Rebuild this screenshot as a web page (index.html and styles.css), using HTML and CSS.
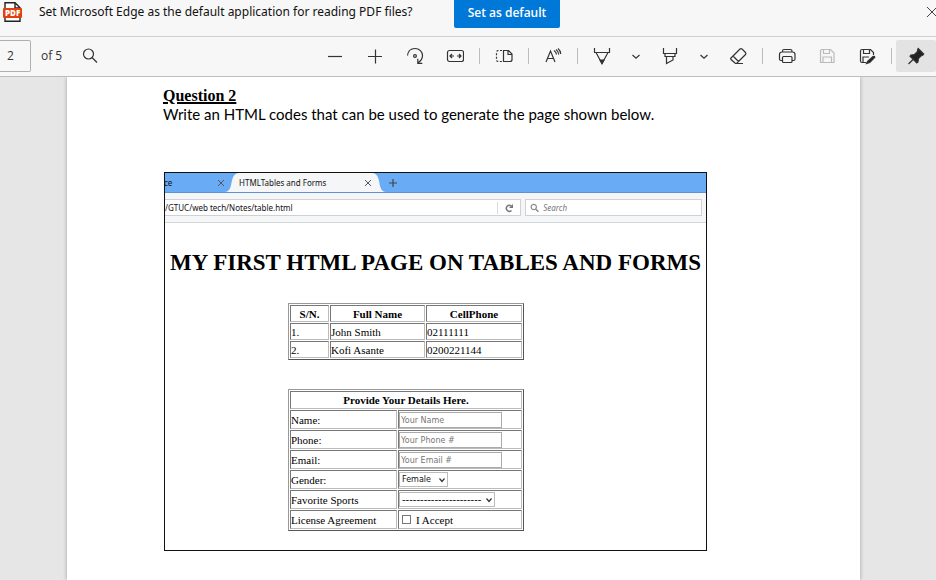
FILE: index.html
```html
<!DOCTYPE html>
<html lang="en">
<head>
    <meta charset="UTF-8">
    <meta name="viewport" content="width=device-width, initial-scale=1.0">
    <title>PDF viewer</title>
    <link rel="stylesheet" href="styles.css">
</head>
<body>
    <header class="notice">
        <svg class="pdf-icon" width="20" height="22" viewBox="0 0 20 22">
            <path d="M2 8V1.700h10l5 5V8M2 16v4.300h15V16" fill="#fff" stroke="#222" stroke-width="1.400"/>
            <path d="M12 2v5h5" fill="none" stroke="#222" stroke-width="1.400"/>
            <rect x="0" y="7" width="19" height="10" rx="1" fill="#e2400c"/>
            <text x="2" y="15" font-family="Open Sans, sans-serif" font-size="8" font-weight="800" fill="#fff">PDF</text>
        </svg>
        <p>Set Microsoft Edge as the default application for reading PDF files?</p>
        <button class="default-btn">Set as default</button>
        <button class="close-btn" aria-label="Close">
            <svg width="10" height="12" viewBox="0 0 10 12"><path d="M1 1l11 11M12 0L1 11" fill="none" stroke="#444"/></svg>
        </button>
    </header>

    <nav class="toolbar">
        <input class="page-no" type="text" value="2" aria-label="Page number">
        <span class="page-count">of 5</span>
        <button class="tool find" aria-label="Find">
            <svg width="18" height="18" viewBox="0 0 18 18"><circle cx="7.5" cy="7" r="5" /><path d="M11 10.500l5 5"/></svg>
        </button>

        <div class="tools">
            <button class="tool" aria-label="Zoom out"><svg width="18" height="18" viewBox="0 0 18 18"><path d="M2 9.500h14"/></svg></button>
            <button class="tool" aria-label="Zoom in"><svg width="18" height="18" viewBox="0 0 18 18"><path d="M2 9.500h14M9.500 2.500v14"/></svg></button>
            <button class="tool" aria-label="Rotate"><svg width="18" height="18" viewBox="0 0 18 18"><path d="M1.500 8.500C2 4 5 1.500 9 1.500c4.500 0 7.500 3.200 7.500 7 0 3-1.800 5.600-4.500 7.300M11.800 11.800v4.500h4.500"/><circle cx="9" cy="9" r="1.400"/></svg></button>
            <button class="tool" aria-label="Fit to width"><svg width="18" height="18" viewBox="0 0 18 18"><rect x="1.500" y="3.500" width="16" height="11" rx="2"/><path d="M4.500 9h3.500M6 7L4 9l2 2M14.500 9H11M13 7l2 2-2 2"/></svg></button>
            <span class="sep"></span>
            <button class="tool" aria-label="Page view"><svg width="18" height="18" viewBox="0 0 18 18"><path d="M7 3.500H3.500Q1.500 3.500 1.500 5.500v7q0 2 2 2H7" stroke-dasharray="2 1.500"/><path d="M8.500 3.500h5l3.500 3.500v5.500q0 2-2 2H8.500zM13 3.500V7.500h4"/></svg></button>
            <span class="sep"></span>
            <button class="tool" aria-label="Read aloud"><svg width="18" height="18" viewBox="0 0 18 18"><path d="M2 15L6.500 4 11 15M3.500 11.500h6M10 3.500c1.500 1 2.300 2.200 2.500 4M12 2.500c1.500 1 2.500 2.800 2.700 5M14 1.500c1.500 1.200 2.500 3 2.700 5.500"/></svg></button>
            <span class="sep"></span>
            <button class="tool" aria-label="Draw"><svg width="18" height="18" viewBox="0 0 18 18"><path d="M1.500 1v4.500h15V1M3 5.500l6 11 6-11"/><path d="M7 13h4l-2 3.500z" fill="#333"/></svg></button>
            <button class="tool drop" aria-label="Draw options"><svg width="10" height="10" viewBox="0 0 10 10"><path d="M1.500 4L5 7.200 8.500 4"/></svg></button>
            <button class="tool" aria-label="Highlight"><svg width="18" height="18" viewBox="0 0 18 18"><path d="M2.500 1v5.500h13V1M4 6.500v3h10v-3M5.500 9.500v7l6.500-3.500V9.500"/></svg></button>
            <button class="tool drop" aria-label="Highlight options"><svg width="10" height="10" viewBox="0 0 10 10"><path d="M1.500 4L5 7.200 8.500 4"/></svg></button>
            <button class="tool" aria-label="Erase"><svg width="18" height="18" viewBox="0 0 18 18"><path d="M2 11L11 2q1-.8 2 0l3.500 3.500q.8 1 0 2L8 16q-1 .8-2 0L2 12.500q-.6-.8 0-1.500zM4 9l5.500 5.500M7 16.500h7"/></svg></button>
            <span class="sep"></span>
            <button class="tool" aria-label="Print"><svg width="18" height="18" viewBox="0 0 18 18"><path d="M4.500 5V4q0-1.500 1.500-1.500h6.500Q14 2.500 14 4v1M4.500 13.500H3q-1.500 0-1.500-1.500V7.500Q1.500 5 4 5h10.500Q17 5 17 7.500V12q0 1.500-1.500 1.500H14"/><rect x="4.500" y="9.500" width="9.500" height="6" rx="1"/></svg></button>
            <button class="tool disabled" aria-label="Save" disabled><svg width="18" height="18" viewBox="0 0 18 18"><path d="M3.500 2.500h9l3.500 3.500v9.500H2.500v-12zM5.500 2.500v4h6v-4M5 15.500v-5.500h8.500v5.500"/></svg></button>
            <button class="tool" aria-label="Save as"><svg width="18" height="18" viewBox="0 0 18 18"><path d="M8 15.500H4q-1.500 0-1.500-1.500V4q0-1.500 1.500-1.500h8.500L15.500 5.500V8M5.500 2.500v4h6v-4M5 15.500v-5.500h6"/><path d="M9.500 14.500l5.500-5q1.500-.8 1.800.8l-5 5.200-3.300 1z" fill="#222"/></svg></button>
            <span class="sep"></span>
            <button class="tool pinned" aria-label="Unpin toolbar"><svg width="18" height="18" viewBox="0 0 18 18"><path d="M11.200 1.500l5.500 5.500-1.300 1.500-1 .2-3 3-.4 3.300-1.200 1L3 9.300 4 8l3.500-.5 3-3 .1-1.800z" fill="#222"/><path d="M6.500 12L1.500 17"/></svg></button>
        </div>
    </nav>

    <main class="viewer">
        <article class="sheet">
            <h2>Question 2</h2>
            <p class="question">Write an HTML codes that can be used to generate the page shown below.</p>

            <section class="browser">
                <div class="tabs">
                    <span class="old-tab"><span>ce</span></span>
                    <svg class="tab-x" width="8" height="8" viewBox="0 0 8 8"><path d="M1 1l6 6M7 1L1 7"/></svg>
                    <svg class="edge" width="14" height="19" viewBox="0 0 14 19"><path d="M0 19C10 18 3 1 14 0v19z"/></svg>
                    <div class="tab">
                        <span>HTMLTables and Forms</span>
                        <svg class="tab-x" width="8" height="8" viewBox="0 0 8 8"><path d="M1 1l6 6M7 1L1 7"/></svg>
                    </div>
                    <svg class="edge" width="14" height="19" viewBox="0 0 14 19"><path d="M14 19C4 18 11 1 0 0v19z"/></svg>
                    <svg class="plus" width="10" height="10" viewBox="0 0 10 10"><path d="M5 1v8M1 5h8"/></svg>
                </div>
                <div class="address-row">
                    <div class="address">
                        <span>/GTUC/web tech/Notes/table.html</span>
                        <button class="reload" aria-label="Reload"><svg width="10" height="10" viewBox="0 0 10 10"><path d="M7.500 7.500A3 3 0 1 1 7.300 3" fill="none" stroke="#777" stroke-width="1.500"/><path d="M9 1v4H5z" fill="#777"/></svg></button>
                    </div>
                    <label class="search">
                        <svg width="10" height="10" viewBox="0 0 10 10"><circle cx="4" cy="4" r="2.800" fill="none" stroke="#888" stroke-width="1.200"/><path d="M6 6l3 3" stroke="#888" stroke-width="1.600"/></svg>
                        <input type="text" placeholder="Search" aria-label="Search">
                    </label>
                </div>

                <div class="content">
                    <h1>MY FIRST HTML PAGE ON TABLES AND FORMS</h1>

                    <table class="people">
                        <tr><th class="sn">S/N.</th><th class="name">Full Name</th><th>CellPhone</th></tr>
                        <tr><td>1.</td><td>John Smith</td><td>02111111</td></tr>
                        <tr><td>2.</td><td>Kofi Asante</td><td>0200221144</td></tr>
                    </table>

                    <form>
                        <table class="details">
                            <tr><th colspan="2">Provide Your Details Here.</th></tr>
                            <tr><td class="label"><label for="name">Name:</label></td><td><input type="text" id="name" placeholder="Your Name"></td></tr>
                            <tr><td><label for="phone">Phone:</label></td><td><input type="text" id="phone" placeholder="Your Phone #"></td></tr>
                            <tr><td><label for="email">Email:</label></td><td><input type="text" id="email" placeholder="Your Email #"></td></tr>
                            <tr><td><label for="gender">Gender:</label></td><td>
                                <span class="pick"><select id="gender"><option>Female</option><option>Male</option></select><svg width="6" height="6" viewBox="0 0 6 6"><path d="M.5 1.500L3 4.500l2.500-3"/></svg></span>
                            </td></tr>
                            <tr><td><label for="sports">Favorite Sports</label></td><td>
                                <span class="pick wide"><select id="sports"><option>----------------------</option></select><svg width="6" height="6" viewBox="0 0 6 6"><path d="M.5 1.500L3 4.500l2.500-3"/></svg></span>
                            </td></tr>
                            <tr><td>License Agreement</td><td>
                                <label class="accept"><input type="checkbox">I Accept</label>
                            </td></tr>
                        </table>
                    </form>
                </div>
            </section>
        </article>
    </main>
</body>
</html>
```
FILE: styles.css
```css
*{
    box-sizing: border-box;
}
body{
    margin: 0;
    min-height: 100vh;
    display: flex;
    flex-direction: column;
    background-color: #e6e6e6;
    font-family: "Noto Sans", sans-serif;
    color: #111;
}
p, h1, h2{
    margin: 0;
}
button{
    border: none;
    background: none;
    padding: 0;
    font-family: inherit;
}

/* default app notice */
.notice{
    display: flex;
    align-items: flex-start;
    height: 37px;
    padding-left: 3px;
    background-color: #f7f7f7;
    border-bottom: 1px solid #d0d0d0;
    font-size: 12px;
    line-height: 24px;
}
.pdf-icon{
    margin-top: 1px;
}
.notice p{
    margin-left: 16px;
    width: 383px;
    white-space: nowrap;
}
.default-btn{
    margin-left: 32px;
    width: 106px;
    height: 28px;
    padding-bottom: 4px;
    border-radius: 0 0 2px 2px;
    background-color: #0078d7;
    color: #fff;
    font: 600 12px "Open Sans", sans-serif;
}
.close-btn{
    margin-left: auto;
    height: 24px;
    display: flex;
    align-items: center;
}

/* toolbar */
.toolbar{
    display: flex;
    align-items: center;
    height: 40px;
    padding-bottom: 2px;
    background-color: #f7f7f7;
    border-bottom: 1px solid #bdbdbd;
    font-size: 12px;
}
.page-no{
    width: 31px;
    height: 32px;
    padding: 0 0 0 7px;
    border: 1px solid #b0b0b0;
    border-left: none;
    border-radius: 0 2px 2px 0;
    background-color: #f7f7f7;
    font: 12px "Open Sans", sans-serif;
    color: #333;
}
.page-count{
    margin-left: 10px;
    width: 29px;
    font-family: "Open Sans", sans-serif;
    color: #333;
}
.tool{
    width: 40px;
    height: 32px;
    display: flex;
    align-items: center;
    justify-content: center;
}
.tool svg{
    fill: none;
    stroke: #333;
    stroke-width: 1.2;
}
.tool.drop{
    width: 28px;
}
.tool.disabled svg{
    stroke: #bbb;
}
.tool.pinned{
    background-color: #e3e3e3;
    border-radius: 2px;
}
.tools{
    display: flex;
    align-items: center;
    margin-left: auto;
}
.sep{
    width: 1px;
    height: 16px;
    margin: 0 4px;
    background-color: #bcbcbc;
}

/* document */
.viewer{
    flex: 1;
    display: flex;
    padding: 0 76px 0 67px;
}
.sheet{
    flex: 1;
    min-width: 0;
    padding: 9px 153px 29px 96px;
    background-color: #fff;
    box-shadow: 0 0 4px rgba(0, 0, 0, 0.3);
    clip-path: inset(0 -6px);
}
.sheet h2{
    font: bold 16px/19px "Liberation Serif", serif;
    text-decoration: underline;
    text-decoration-thickness: 2px;
    color: #000;
}
.question{
    font-family: Lato, sans-serif;
    font-size: 15px;
    line-height: 19px;
    white-space: nowrap;
    color: #000;
}

/* browser window inside the document */
.browser{
    margin: 48px 0 0 1px;
    border: 1px solid #111;
    font-size: 8px;
    overflow: hidden;
}
.tabs{
    display: flex;
    align-items: center;
    height: 20px;
    background-color: #6aabf6;
    border-bottom: 1px solid #5f93cf;
}
.old-tab{
    width: 52px;
    overflow: hidden;
}
.old-tab span{
    margin-left: -1px;
}
.tab-x{
    stroke: #555;
    fill: none;
}
.edge{
    fill: #f5f6f7;
}
.tab{
    height: 19px;
    width: 133px;
    display: flex;
    align-items: center;
    justify-content: space-between;
    background-color: #f5f6f7;
    white-space: nowrap;
}
.plus{
    margin-left: 2px;
    stroke: #444;
    stroke-width: 1.2;
}
.address-row{
    display: flex;
    gap: 4px;
    height: 30px;
    padding: 6px 4px 6px 0;
    background-color: #f5f6f7;
    border-bottom: 1px solid #d4d6d8;
}
.address{
    flex: 1;
    display: flex;
    align-items: center;
    justify-content: space-between;
    border: 1px solid #cfd1d4;
    border-left: none;
    background-color: #fff;
    white-space: nowrap;
}
.reload{
    display: flex;
    align-items: center;
    justify-content: center;
    width: 23px;
    height: 12px;
    border-left: 1px solid #ddd;
}
.search{
    width: 33%;
    display: flex;
    align-items: center;
    padding-left: 4px;
    border: 1px solid #cfd1d4;
    background-color: #fff;
}
.search input{
    width: 100%;
    border: none;
    padding: 0 0 0 4px;
    background: none;
    font: italic 8px "Noto Sans", sans-serif;
}
.content{
    padding: 26px 0 19px;
    font-family: "Liberation Serif", serif;
    font-size: 11px;
    color: #000;
}
.content h1{
    font-size: 23px;
    line-height: 28px;
    text-align: center;
    white-space: nowrap;
}
table{
    width: 236px;
    margin-left: 123px;
    border: 1px solid #999;
    border-right-color: #555;
    border-bottom-color: #555;
    border-spacing: 1px;
    font-size: 11px;
    line-height: 12px;
}
th, td{
    height: 17px;
    padding: 0;
    border: 1px solid #777;
    border-right-color: #bbb;
    border-bottom-color: #bbb;
    text-align: left;
}
th{
    text-align: center;
}
.people{
    margin-top: 26px;
}
.sn{
    width: 39px;
}
.name{
    width: 95px;
}
.details{
    margin-top: 29px;
}
.details th{
    height: 18px;
}
.details td{
    height: 19px;
}
.details .label{
    width: 107px;
}
.details input[type="text"]{
    display: block;
    width: 103px;
    height: 16px;
    padding: 1px 1px 0;
    border: 1px solid #aaa;
    font: 8px "DejaVu Sans", sans-serif;
}
::placeholder{
    color: #777;
}
.pick{
    position: relative;
    display: block;
    width: 49px;
    height: 15px;
}
.pick.wide{
    width: 96px;
}
.pick select{
    appearance: none;
    display: block;
    width: 100%;
    height: 15px;
    padding: 0 2px;
    border: 1px solid #bbb;
    background-color: #fff;
    font: 8px "DejaVu Sans", sans-serif;
    color: #111;
}
.pick.wide select{
    font-size: 10px;
}
.pick svg{
    position: absolute;
    right: 3px;
    top: 5px;
    fill: none;
    stroke: #333;
    stroke-width: 1.2;
}
.accept{
    display: flex;
    align-items: center;
    gap: 5px;
}
.accept input{
    appearance: none;
    width: 9px;
    height: 9px;
    margin: 0 0 0 3px;
    border: 1px solid #777;
    background-color: #fff;
}
```
